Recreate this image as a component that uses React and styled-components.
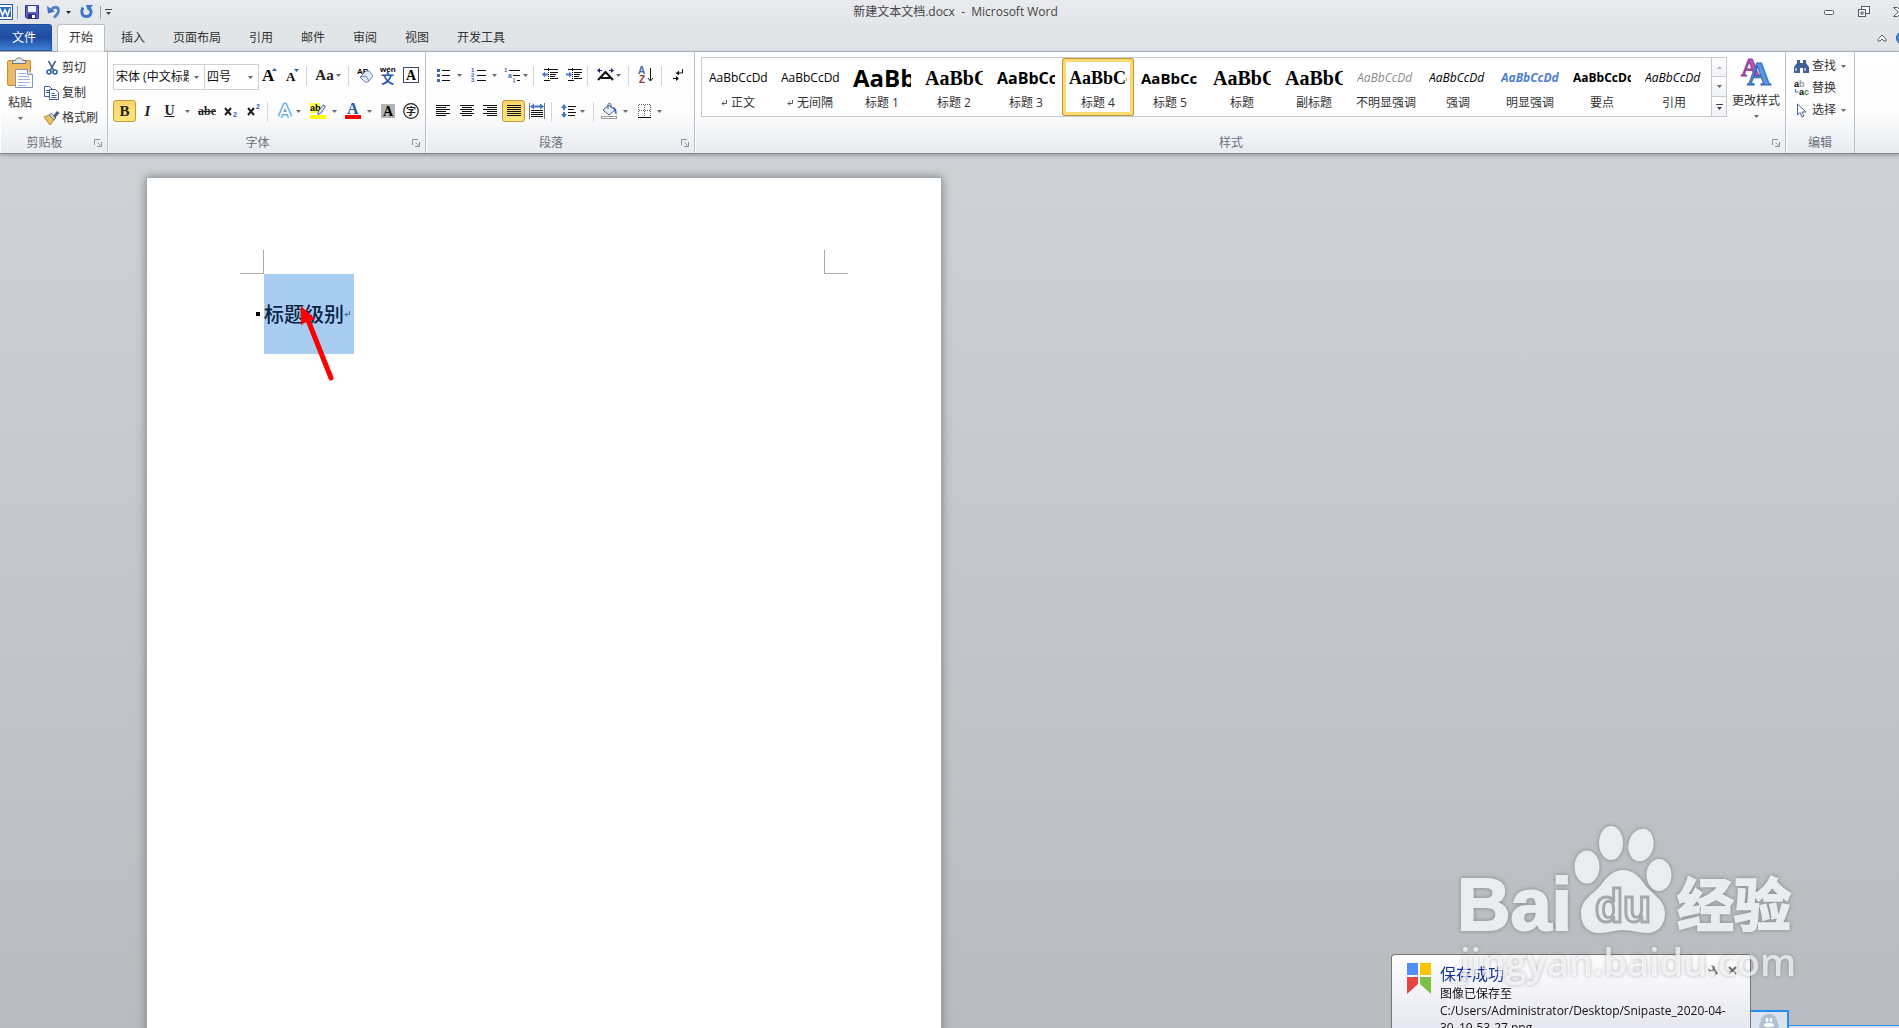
import React from 'react';
import styled, { createGlobalStyle } from 'styled-components';

export default function App() {
  return (
    <Window>
      <GlobalStyle />
      <TitleBar>
        <QuickAccess>
          <QuickButton $w={17} aria-label="Word">
            <WordIcon />
          </QuickButton>
          <QuickLine />
          <QuickButton $w={27} aria-label="保存">
            <SaveIcon />
          </QuickButton>
          <QuickButton $w={28} $gap={5} aria-label="撤消">
            <UndoIcon />
            <Arrow dark />
          </QuickButton>
          <QuickButton $w={27} aria-label="重复">
            <RedoIcon />
          </QuickButton>
          <QuickLine />
          <QuickButton $w={14} aria-label="自定义快速访问工具栏">
            <MoreIcon />
          </QuickButton>
        </QuickAccess>
        <DocTitle>新建文本文档.docx&nbsp; -&nbsp; Microsoft Word</DocTitle>
        <WindowControls>
          <button aria-label="最小化">
            <svg width="12" height="12">
              <rect x="1.5" y="4.5" width="9" height="4" rx="1" fill="#fff" stroke="#555b6b" />
            </svg>
          </button>
          <button aria-label="还原">
            <svg width="14" height="12" fill="#fff" stroke="#555b6b">
              <rect x="4.5" y="0.5" width="8" height="7" />
              <rect x="1.5" y="3.5" width="7" height="7" />
              <rect x="4" y="6" width="2" height="2" />
            </svg>
          </button>
          <button aria-label="关闭">
            <svg width="6" height="12" fill="#fff" stroke="#555b6b">
              <path d="M0.5 1.5h4l3 3l3-3h4l-5 4.5l5 4.5h-4l-3-3l-3 3h-4l5-4.5z" />
            </svg>
          </button>
        </WindowControls>
      </TitleBar>

      <TabBar>
        <FileTab>文件</FileTab>
        {tabs.map((tab) => (
          <Tab key={tab} $active={tab === '开始'}>
            {tab}
          </Tab>
        ))}
        <TabTools>
          <button aria-label="功能区最小化">
            <svg width="10" height="8" fill="#fff" stroke="#555b6b">
              <path d="M1 5.5L5 1l4 4.5v1.5H7L5 5L3 7H1z" />
            </svg>
          </button>
          <button aria-label="帮助">
            <svg width="3" height="14">
              <circle cx="7" cy="7" r="6.5" fill="#3f8be0" stroke="#2a62ad" />
            </svg>
          </button>
        </TabTools>
      </TabBar>

      <Ribbon>
        <Group $w={108} name="剪贴板" launcher>
          <ClipboardBody>
            <BigButton $w={40}>
              <PasteIcon />
              粘贴
              <Arrow />
            </BigButton>
            <SmallColumn $row={25} $left={4}>
              <SmallButton>
                <CutIcon />
                剪切
              </SmallButton>
              <SmallButton>
                <CopyIcon />
                复制
              </SmallButton>
              <SmallButton>
                <BrushIcon />
                格式刷
              </SmallButton>
            </SmallColumn>
          </ClipboardBody>
        </Group>

        <Group $w={318} name="字体" launcher>
          <Rows>
            <Row>
              <Combo $w={92}>
                <select aria-label="字体">
                  <option>宋体 (中文标题)</option>
                </select>
                <Arrow />
              </Combo>
              <Combo $w={54}>
                <select aria-label="字号">
                  <option>四号</option>
                </select>
                <Arrow />
              </Combo>
              <Tool $w={22} aria-label="增大字体">
                <GrowIcon />
              </Tool>
              <Tool $w={23} aria-label="缩小字体">
                <ShrinkIcon />
              </Tool>
              <Line />
              <Tool $w={36} $gap={2} aria-label="更改大小写">
                <Glyph $size={15}>Aa</Glyph>
                <Arrow />
              </Tool>
              <Line />
              <Tool $w={24} aria-label="清除格式">
                <EraserIcon />
              </Tool>
              <Tool $w={23} aria-label="拼音指南">
                <PinyinIcon />
              </Tool>
              <Tool $w={23} aria-label="字符边框">
                <BoxedIcon />
              </Tool>
            </Row>
            <Row>
              <Tool $w={23} $on aria-label="加粗">
                <Glyph $size={15}>B</Glyph>
              </Tool>
              <Tool $w={23} aria-label="倾斜">
                <Glyph $size={15} $italic>
                  I
                </Glyph>
              </Tool>
              <Tool $w={36} $gap={10} aria-label="下划线">
                <Glyph $size={14} $line="underline">
                  U
                </Glyph>
                <Arrow />
              </Tool>
              <Tool $w={24} aria-label="删除线">
                <Glyph $size={12} $line="line-through">
                  abe
                </Glyph>
              </Tool>
              <Tool $w={23} aria-label="下标">
                <ScriptIcon y={14} />
              </Tool>
              <Tool $w={23} aria-label="上标">
                <ScriptIcon y={6} />
              </Tool>
              <Line />
              <Tool $w={35} $gap={3} aria-label="文本效果">
                <EffectIcon />
                <Arrow />
              </Tool>
              <Tool $w={35} $gap={6} aria-label="突出显示">
                <HighlightIcon />
                <Arrow />
              </Tool>
              <Tool $w={35} $gap={6} aria-label="字体颜色">
                <ColorIcon />
                <Arrow />
              </Tool>
              <Tool $w={24} aria-label="字符底纹">
                <ShadeIcon />
              </Tool>
              <Tool $w={22} aria-label="带圈字符">
                <CircledIcon />
              </Tool>
            </Row>
          </Rows>
        </Group>

        <Group $w={269} name="段落" launcher>
          <Rows>
            <Row>
              <Tool $w={35} $gap={5} aria-label="项目符号">
                <BulletsIcon />
                <Arrow />
              </Tool>
              <Tool $w={35} $gap={5} aria-label="编号">
                <NumbersIcon />
                <Arrow />
              </Tool>
              <Tool $w={30} $gap={2} aria-label="多级列表">
                <LevelsIcon />
                <Arrow />
              </Tool>
              <Line />
              <Tool $w={26} aria-label="减少缩进量">
                <IndentIcon back />
              </Tool>
              <Tool $w={22} aria-label="增加缩进量">
                <IndentIcon />
              </Tool>
              <Line />
              <Tool $w={35} $gap={2} aria-label="中文版式">
                <AsianIcon />
                <Arrow />
              </Tool>
              <Line />
              <Tool $w={27} aria-label="排序">
                <SortIcon />
              </Tool>
              <Line />
              <Tool $w={26} aria-label="显示编辑标记">
                <MarkIcon />
              </Tool>
            </Row>
            <Row>
              <Tool $w={24} aria-label="文本左对齐">
                <AlignIcon lines={[[0, 14], [0, 10], [0, 14], [0, 10], [0, 14], [0, 10]]} />
              </Tool>
              <Tool $w={23} aria-label="居中">
                <AlignIcon lines={[[0, 14], [2, 10], [0, 14], [2, 10], [0, 14], [2, 10]]} />
              </Tool>
              <Tool $w={24} aria-label="文本右对齐">
                <AlignIcon lines={[[0, 14], [4, 10], [0, 14], [4, 10], [0, 14], [4, 10]]} />
              </Tool>
              <Tool $w={23} $on aria-label="两端对齐">
                <AlignIcon lines={[[0, 14], [0, 14], [0, 14], [0, 14], [0, 14], [0, 14]]} />
              </Tool>
              <Tool $w={24} aria-label="分散对齐">
                <DistributeIcon />
              </Tool>
              <Line />
              <Tool $w={36} $gap={3} aria-label="行距">
                <SpacingIcon />
                <Arrow />
              </Tool>
              <Line />
              <Tool $w={35} $gap={5} aria-label="底纹">
                <BucketIcon />
                <Arrow />
              </Tool>
              <Tool $w={35} $gap={5} aria-label="边框">
                <BorderIcon />
                <Arrow />
              </Tool>
            </Row>
          </Rows>
        </Group>

        <Group name="样式" launcher>
          <StylesBody>
            <Gallery>
              {styleList.map((item) => (
                <StyleItem key={item.name} $active={item.name === '标题 4'}>
                  <Sample
                    $size={item.size}
                    $serif={item.serif}
                    $bold={item.bold}
                    $italic={item.italic}
                    $color={item.color}
                  >
                    {item.text || 'AaBbCcDd'}
                  </Sample>
                  <StyleName>
                    {item.mark && <ReturnIcon />}
                    {item.name}
                  </StyleName>
                </StyleItem>
              ))}
            </Gallery>
            <GalleryScroll>
              <button aria-label="上一行" disabled>
                <svg width="5" height="3">
                  <path d="M0 3L2.5 0L5 3z" fill="#b5b9c0" />
                </svg>
              </button>
              <button aria-label="下一行">
                <Arrow />
              </button>
              <button aria-label="其他">
                <MoreIcon />
              </button>
            </GalleryScroll>
            <BigButton $w={58}>
              <ChangeStylesIcon />
              更改样式
              <Arrow />
            </BigButton>
          </StylesBody>
        </Group>

        <Group $w={69} name="编辑">
          <SmallColumn $row={22} $left={8}>
            <SmallButton>
              <FindIcon />
              查找
              <Arrow />
            </SmallButton>
            <SmallButton>
              <ReplaceIcon />
              替换
            </SmallButton>
            <SmallButton>
              <SelectIcon />
              选择
              <Arrow />
            </SmallButton>
          </SmallColumn>
        </Group>
        <RibbonRest />
      </Ribbon>

      <Workspace>
        <Page>
          <Corners>
            <Corner $side="right" />
            <Corner $side="left" />
          </Corners>
          <HeadingLine>
            <HeadingDot />
            <Selected>
              标题级别
              <ReturnIcon color="#4a6a92" />
              <RedArrow />
            </Selected>
          </HeadingLine>
        </Page>
      </Workspace>

      <InputPanel>
        <PenguinBox>
          <PenguinIcon />
        </PenguinBox>
        <PanelEdge />
      </InputPanel>
      <Toast>
        <ToastLogo />
        <ToastText>
          <ToastHead>
            保存成功
            <ToastTools>
              <button aria-label="设置">
                <WrenchIcon />
              </button>
              <button aria-label="关闭">
                <svg width="9" height="9" stroke="#6a6a6a" strokeWidth="2">
                  <path d="M1 1l7 7M8 1L1 8" />
                </svg>
              </button>
            </ToastTools>
          </ToastHead>
          <p>图像已保存至</p>
          <p>
            C:/Users/Administrator/Desktop/Snipaste_2020-04-
            <wbr />
            30_19-53-27.png
          </p>
        </ToastText>
      </Toast>
      <Watermark />
    </Window>
  );
}

const tabs = ['开始', '插入', '页面布局', '引用', '邮件', '审阅', '视图', '开发工具'];

const styleList = [
  { name: '正文', mark: true },
  { name: '无间隔', mark: true },
  { name: '标题 1', size: 24, bold: true, text: 'AaBb' },
  { name: '标题 2', size: 20, bold: true, serif: true, text: 'AaBbC' },
  { name: '标题 3', size: 16, bold: true, text: 'AaBbCc' },
  { name: '标题 4', size: 18, bold: true, serif: true, text: 'AaBbCc' },
  { name: '标题 5', size: 15, bold: true, text: 'AaBbCc' },
  { name: '标题', size: 20, bold: true, serif: true, text: 'AaBbC' },
  { name: '副标题', size: 20, bold: true, serif: true, text: 'AaBbC' },
  { name: '不明显强调', italic: true, color: '#8a8a8a' },
  { name: '强调', italic: true },
  { name: '明显强调', italic: true, bold: true, color: '#4f81c7' },
  { name: '要点', bold: true },
  { name: '引用', italic: true }
];

/* ribbon group with its caption */

function Group({ $w, name, launcher, children }) {
  return (
    <GroupBox $w={$w}>
      {children}
      <Caption>
        <span>{name}</span>
        {launcher && (
          <Launcher aria-label={`${name}对话框`}>
            <svg width="8" height="8" fill="none" stroke="#8b919c">
              <path d="M0.5 6V0.5H6M3.5 3.5l3 3M7.5 3v4.5H3" />
            </svg>
          </Launcher>
        )}
      </Caption>
    </GroupBox>
  );
}

/* icons */

function Arrow({ dark }) {
  return (
    <svg width="5" height="3">
      <path d="M0 0h5L2.5 3z" fill={dark ? '#222' : '#666a70'} />
    </svg>
  );
}

function MoreIcon() {
  return (
    <svg width="7" height="6" fill="#444">
      <path d="M0 0h7v1H0zM1 3h5L3.5 6z" />
    </svg>
  );
}

function ReturnIcon({ color = '#555' }) {
  return (
    <svg width="6" height="6" fill="none" stroke={color}>
      <path d="M5.500 0v3.500H1M3 1.500L1 3.500L3 5.500" />
    </svg>
  );
}

function WordIcon() {
  return (
    <svg width="13" height="16">
      <rect x="-2" y="0.500" width="14.500" height="15" fill="#fff" stroke="#2b5da8" />
      <rect x="-1" y="3" width="12" height="10" fill="#2f6cc0" />
      <path d="M0 4.500L2.500 11.500L5 6L7.500 11.500L10 4.500" fill="none" stroke="#fff" strokeWidth="1.600" />
    </svg>
  );
}

function SaveIcon() {
  return (
    <svg width="14" height="14">
      <path d="M0.500 0.500h13v13H2l-1.500-1.500z" fill="#5a5fc8" stroke="#34388f" />
      <rect x="3" y="1" width="8" height="6" fill="#f4f6ff" />
      <rect x="3" y="9" width="8" height="5" fill="#2c2f6e" />
      <rect x="7" y="10" width="3" height="3" fill="#fff" />
    </svg>
  );
}

function UndoIcon() {
  return (
    <svg width="14" height="14">
      <path d="M4 5C7 1 11.500 1.500 11.500 5.500C11.500 8.500 9.500 10.500 7 12.500" fill="none" stroke="#5580c8" strokeWidth="2.800" />
      <path d="M0 1l1 7.500l7-2z" fill="#4272c4" />
    </svg>
  );
}

function RedoIcon() {
  return (
    <svg width="14" height="14">
      <path d="M3 2.500C0.500 7 2 11.500 6.500 11.500S12.500 6 9.500 3.500" fill="none" stroke="#3a74cc" strokeWidth="2.800" />
      <path d="M6 0h7l-5 6z" fill="#3a74cc" />
    </svg>
  );
}

function PasteIcon() {
  return (
    <svg width="28" height="32">
      <rect x="1.500" y="3.500" width="23" height="25" rx="1.500" fill="#edba5c" stroke="#c98f35" />
      <path d="M6.500 6.500V3.500H9.500C9.500 0 16.500 0 16.500 3.500h3v3z" fill="#e3e5e8" stroke="#6f747c" />
      <path d="M9.500 12.500h12l5 5v13h-17z" fill="#fff" stroke="#8594b5" />
      <path d="M21.500 12.500v5h5" fill="#dfe7f5" stroke="#8594b5" />
      <path d="M12 16.500h8M12 19.500h11M12 22.500h12M12 25.500h12M12 28.500h8" stroke="#9db4dd" />
    </svg>
  );
}

function CutIcon() {
  return (
    <svg viewBox="-1 0 16 14" width="16" height="14" fill="none">
      <path d="M3.500 0L8.500 9M10.500 0L5.500 9" stroke="#4b6489" strokeWidth="1.600" />
      <circle cx="4" cy="11" r="2" stroke="#2f61b8" strokeWidth="1.600" />
      <circle cx="10" cy="11" r="2" stroke="#2f61b8" strokeWidth="1.600" />
    </svg>
  );
}

function CopyIcon() {
  return (
    <svg width="16" height="14" fill="#fff" stroke="#3c5f9d">
      <path d="M0.500 0.500h5l3 3v7h-8zM2 4.500h3M2 6.500h3" />
      <path d="M5.500 3.500h6l3 3v7h-9zM7.500 7.500h3M7.500 9.500h5M7.500 11.500h5" />
    </svg>
  );
}

function BrushIcon() {
  return (
    <svg width="16" height="14">
      <path d="M0 6l5-2l5 5l-4 5z" fill="#edc060" stroke="#b48736" />
      <path d="M5 4l2.500-1.500L12 7l-2 2z" fill="#d8dce2" stroke="#666e7a" />
      <path d="M9 5l4-5l2.500 2L11 7z" fill="#4a5f80" />
    </svg>
  );
}

function GrowIcon() {
  return (
    <svg width="16" height="16">
      <SerifText x="0" y="14" fontSize="17">A</SerifText>
      <path d="M10 4l2.500-3L15 4z" fill="#2f5fa8" />
    </svg>
  );
}

function ShrinkIcon() {
  return (
    <svg width="14" height="16">
      <SerifText x="0" y="14" fontSize="13">A</SerifText>
      <path d="M8 2h5L10.500 5z" fill="#2f5fa8" />
    </svg>
  );
}

function EraserIcon() {
  return (
    <svg width="17" height="16">
      <SansText x="1" y="7" fontSize="8">AB</SansText>
      <path d="M4 10l5 5h3l5-6l-4-5h-3z" fill="#e4eaf6" stroke="#7186b0" />
      <path d="M4 10l6-1l3 5" fill="none" stroke="#7186b0" />
    </svg>
  );
}

function PinyinIcon() {
  return (
    <svg width="18" height="17">
      <SansText x="1" y="5" fontSize="8">wén</SansText>
      <HanText x="2" y="16" fontSize="13" fill="#2957a5">文</HanText>
    </svg>
  );
}

function BoxedIcon() {
  return (
    <svg width="16" height="16">
      <rect x="0.500" y="0.500" width="15" height="15" fill="#fff" stroke="#3e4b60" />
      <SerifText x="3" y="13" fontSize="14">A</SerifText>
    </svg>
  );
}

function ScriptIcon({ y }) {
  return (
    <svg width="15" height="16">
      <path d="M2 5l6 7M8 5l-6 7" stroke="#222" strokeWidth="2" />
      <SansText x="10" y={y} fontSize="7" fill="#2f5fb5">2</SansText>
    </svg>
  );
}

function EffectIcon() {
  return (
    <svg width="16" height="16" fill="none" strokeLinejoin="round">
      <path d="M3 14L8 2l5 12M5 10h6" stroke="#b5dbf7" strokeWidth="6" />
      <path d="M3 14L8 2l5 12M5 10h6" stroke="#5aa2da" strokeWidth="4" />
      <path d="M3 14L8 2l5 12M5 10h6" stroke="#fff" strokeWidth="2" />
    </svg>
  );
}

function HighlightIcon() {
  return (
    <svg width="16" height="16">
      <rect width="10" height="10" fill="#ffff3c" />
      <SansText x="0" y="8" fontSize="9">ab</SansText>
      <path d="M8 9l5-7l2.500 1.500L11 10l-3 1.500z" fill="#dfe8f6" stroke="#40618f" />
      <rect y="12" width="16" height="4" fill="#ff0" />
    </svg>
  );
}

function ColorIcon() {
  return (
    <svg width="16" height="16">
      <SerifText x="2" y="11" fontSize="16" fill="#2955a3">A</SerifText>
      <rect y="12" width="16" height="4" fill="#f00" />
    </svg>
  );
}

function ShadeIcon() {
  return (
    <svg width="14" height="14">
      <rect width="14" height="14" fill="#b4b4b4" />
      <SerifText x="2" y="12" fontSize="14">A</SerifText>
    </svg>
  );
}

function CircledIcon() {
  return (
    <svg width="16" height="16">
      <circle cx="8" cy="8" r="7.300" fill="#fff" stroke="#222" strokeWidth="1.200" />
      <HanText x="3" y="12" fontSize="10" fill="#222">字</HanText>
    </svg>
  );
}

function BulletsIcon() {
  return (
    <svg width="16" height="16" stroke="#111">
      <path d="M6 3.500h8M6 8.500h8M6 13.500h8" />
      <path d="M1 3.500h3M1 8.500h3M1 13.500h3" stroke="#3f66ad" strokeWidth="3" />
    </svg>
  );
}

function NumbersIcon() {
  return (
    <svg width="16" height="16">
      <path d="M6 3.500h9M6 8.500h9M6 13.500h9" stroke="#111" />
      <SansText x="0" y="5" fontSize="6" fill="#3f66ad">1</SansText>
      <SansText x="0" y="10" fontSize="6" fill="#3f66ad">2</SansText>
      <SansText x="0" y="15" fontSize="6" fill="#3f66ad">3</SansText>
    </svg>
  );
}

function LevelsIcon() {
  return (
    <svg width="17" height="16">
      <path d="M5 3.500h11M9 8.500h7M13 13.500h3" stroke="#111" />
      <SansText x="0" y="5" fontSize="6" fill="#3f66ad">1</SansText>
      <SansText x="4" y="11" fontSize="7" fill="#3f66ad">a</SansText>
      <SansText x="9" y="16" fontSize="7" fill="#3f66ad">i</SansText>
    </svg>
  );
}

function IndentIcon({ back }) {
  return (
    <svg width="16" height="16">
      <path d="M2 2.500h14M8 5.500h8M8 7.500h6M8 9.500h5M8 11.500h8M2 13.500h6" stroke="#111" />
      <path d="M6.500 1v14" stroke="#111" strokeDasharray="1 1" />
      <path d={back ? 'M0 7.500L3 4.500V6.500H6V8.500H3V10.500z' : 'M6 7.500L3 4.500V6.500H0V8.500H3V10.500z'} fill="#4378cc" />
    </svg>
  );
}

function AsianIcon() {
  return (
    <svg width="17" height="16" fill="none">
      <path d="M1 13L8.500 5L16 13M4 11h9" stroke="#111" strokeWidth="2" />
      <path d="M1 3.500h4M12 3.500h4" stroke="#1b1f86" />
      <path d="M0 3.500l3-2.500v5zM17 3.500l-3-2.500v5z" fill="#1b1f86" />
    </svg>
  );
}

function SortIcon() {
  return (
    <svg width="16" height="18">
      <SansText x="0" y="8" fontSize="10" fill="#3f66ad">A</SansText>
      <SansText x="1" y="17" fontSize="10" fill="#983b3b">Z</SansText>
      <path d="M12.500 2v13M10 12l2.500 3l2.500-3" fill="none" stroke="#111" />
    </svg>
  );
}

function MarkIcon() {
  return (
    <svg width="12" height="14" fill="none" stroke="#111">
      <path d="M10.500 1v4h-6M1 10.500h5" />
      <path d="M7 2.500v5L4 5zM4 8v5l3-2.500z" fill="#111" stroke="none" />
    </svg>
  );
}

function AlignIcon({ lines }) {
  return (
    <svg width="14" height="12" fill="#111">
      {lines.map(([x, w], i) => (
        <rect key={i} x={x} y={i * 2} width={w} height="1" />
      ))}
    </svg>
  );
}

function DistributeIcon() {
  return (
    <svg width="16" height="16">
      <path d="M0.500 0v16M15.500 0v16" stroke="#6d7484" />
      <path d="M2 7.500h12M2 9.500h12M2 11.500h12M2 13.500h12" stroke="#111" />
      <path d="M1 3.500l4-3v2h6v-2l4 3l-4 3v-2H5v2z" fill="#3f74c8" />
    </svg>
  );
}

function SpacingIcon() {
  return (
    <svg width="16" height="16">
      <path d="M7 3.500h8M7 6.500h6M7 9.500h8M7 12.500h7" stroke="#111" />
      <path d="M0 5l3-4l3 4H4v2H2V5zM0 11l3 4l3-4H4V9H2v2z" fill="#3f74c8" />
    </svg>
  );
}

function BucketIcon() {
  return (
    <svg width="17" height="16">
      <path d="M2 7l6-5l6 5l-6 5z" fill="#e6edf8" stroke="#45618f" />
      <path d="M7 6V1.500c0-1.500 3-1.500 3 0V5" fill="none" stroke="#45618f" />
      <path d="M11 4c4 0 5 3 4.500 8c-1.500-1-2-3-2-5z" fill="#3568b8" />
      <rect x="0.500" y="13.500" width="15" height="2" fill="#fff" stroke="#999" />
    </svg>
  );
}

function BorderIcon() {
  return (
    <svg width="14" height="14" fill="none" stroke="#666">
      <path d="M0.500 12V0.500H12.500V12M6.500 1v11M1 6.500h12" strokeDasharray="1 1" />
      <path d="M0 13.500h13" stroke="#111" />
    </svg>
  );
}

function ChangeStylesIcon() {
  return (
    <svg width="30" height="30">
      <SerifText x="0" y="19" fontSize="26" fill="#b758bd" stroke="#8f3c98">A</SerifText>
      <SerifText x="6" y="28" fontSize="33" fill="#5b97e2" stroke="#2f63b0">A</SerifText>
    </svg>
  );
}

function FindIcon() {
  return (
    <svg width="16" height="13" fill="#3f5f96">
      <path d="M3 0h3v3h3V0h3v3l3 4v6h-6V8H6v5H0V7l3-4z" />
      <path d="M2 8v3M11 8v3" stroke="#c8d6ee" strokeWidth="1.500" />
    </svg>
  );
}

function ReplaceIcon() {
  return (
    <svg width="16" height="16">
      <SansText x="0" y="7" fontSize="9">
        a<tspan fill="#999">b</tspan>
      </SansText>
      <SansText x="5" y="15" fontSize="9">
        a<tspan fill="#3a9a3a">c</tspan>
      </SansText>
      <path d="M1.500 9v3h3" fill="none" stroke="#3f74c8" />
    </svg>
  );
}

function SelectIcon() {
  return (
    <svg width="16" height="15">
      <path d="M3.500 1v11l2.500-2.500l2 4.500l2-1l-2-4h4z" fill="#fff" stroke="#4a5f8f" />
    </svg>
  );
}

function PenguinIcon() {
  return (
    <svg width="22" height="14">
      <path d="M2 16C0 11 3 8 3 6C4 2 7 0 11 0S18 2 19 6C19 8 22 11 20 16z" fill="#b3c2d3" />
      <ellipse cx="9" cy="6" rx="1.500" ry="2" fill="#fff" />
      <ellipse cx="13" cy="6" rx="1.500" ry="2" fill="#fff" />
      <ellipse cx="11" cy="11" rx="5" ry="2" fill="#fff" />
    </svg>
  );
}

function WrenchIcon() {
  return (
    <svg width="10" height="10">
      <path d="M0 3L2 5H4.500V2.500L3 0.500C6 0 7.500 2 7 4L10 8L8 10L4.500 7C2 7.500 0 5.500 0 3z" fill="#7a7a7a" />
    </svg>
  );
}

function ToastLogo() {
  return (
    <svg width="24" height="32">
      <rect width="11" height="12" fill="#4f8ff7" />
      <rect x="13" width="11" height="12" fill="#fcc404" />
      <path d="M0 14h11v7L0 31z" fill="#e84444" />
      <path d="M13 14h11v17L13 21z" fill="#7cc142" />
    </svg>
  );
}

function RedArrow() {
  return (
    <RedArrowSvg width="36" height="78">
      <path d="M7 15L30 73" stroke="#f00" strokeWidth="5" strokeLinecap="round" />
      <path d="M0 1L14 14L7 16L0 20z" fill="#f00" />
    </RedArrowSvg>
  );
}

function Watermark() {
  return (
    <WatermarkSvg width="350" height="180" viewBox="0 0 350 180">
      <g fill="#ebecee">
        <SansText x="4" y="110" fontSize="74" stroke="#ebecee" strokeWidth="2">
          Bai
        </SansText>
        <ellipse cx="134" cy="47" rx="12.500" ry="16.500" />
        <ellipse cx="158" cy="23" rx="12" ry="17" />
        <ellipse cx="188" cy="25" rx="12.500" ry="16.500" transform="rotate(12 188 25)" />
        <ellipse cx="206" cy="55" rx="12.500" ry="16" />
        <path d="M170 50C180 50 187 57 192 65C199 74 212 80 212 93C212 106 204 113 194 113C184 113 180 110 170 110C160 110 157 113 146 113C135 113 128 106 128 93C128 79 141 74 148 65C154 57 160 50 170 50z" />
        <HanText x="224" y="106" fontSize="57" stroke="#ebecee" strokeWidth="2">
          经验
        </HanText>
      </g>
      <SansText x="142" y="102" fontSize="46" fill="#ebecee" stroke="#a5a9ae" strokeWidth="3">
        du
      </SansText>
      <Address x="7" y="156">
        jingyan.baidu.com
      </Address>
    </WatermarkSvg>
  );
}

const GlobalStyle = createGlobalStyle`
  * {
    box-sizing: border-box;
  }
  body {
    margin: 0;
    overflow: hidden;
    font-family: 'Open Sans', 'Noto Sans CJK SC', sans-serif;
    font-size: 12px;
    line-height: 16px;
    color: #333;
  }
  button {
    display: flex;
    align-items: center;
    justify-content: center;
    margin: 0;
    padding: 0;
    border: none;
    background: none;
    font: inherit;
    color: inherit;
  }
  p {
    margin: 0;
  }
  svg {
    flex: none;
    overflow: visible;
  }
`;

const SerifText = styled.text`
  font-family: 'Liberation Serif', serif;
  font-weight: bold;
`;

const SansText = styled.text`
  font-family: 'Liberation Sans', sans-serif;
  font-weight: bold;
`;

const HanText = styled.text`
  font-family: 'Noto Sans CJK SC', sans-serif;
  font-weight: bold;
`;

const Window = styled.div`
  display: flex;
  flex-direction: column;
  height: 100vh;
  overflow: hidden;
`;

const TitleBar = styled.header`
  display: grid;
  grid-template-columns: 1fr auto 1fr;
  align-items: center;
  height: 24px;
  background: linear-gradient(#e9ebef, #e3e6e9);
`;

const QuickAccess = styled.div`
  display: flex;
  align-items: center;
`;

const QuickButton = styled.button`
  width: ${({ $w }) => $w}px;
  height: 22px;
  gap: ${({ $gap }) => $gap || 0}px;
  &:first-child {
    justify-content: flex-start;
  }
`;

const QuickLine = styled.i`
  width: 1px;
  height: 13px;
  background: #9a9ea6;
`;

const DocTitle = styled.div`
  padding-left: 12px;
  color: #444;
`;

const WindowControls = styled.div`
  display: flex;
  justify-content: flex-end;
  gap: 22px;
`;

const TabBar = styled.nav`
  display: flex;
  height: 28px;
  background: #e1e5e8;
  border-bottom: 1px solid #b3b6ba;
`;

const FileTab = styled.button`
  width: 52px;
  height: 27px;
  margin-right: 5px;
  padding-right: 3px;
  border: 1px solid #1f4d9c;
  border-left: none;
  border-radius: 0 3px 0 0;
  background: linear-gradient(#2a5db0, #1d4c9f 50%, #3f7fd6);
  color: #fff;
`;

const Tab = styled.button`
  height: 28px;
  padding: ${({ $active }) => ($active ? '0 12px' : '0 14px')};
  ${({ $active }) =>
    $active &&
    `
    margin-right: 2px;
    background: #fff;
    border-radius: 3px 3px 0 0;
    box-shadow: inset 1px 1px #b9bdc4, inset -1px 0 #b9bdc4;
  `}
`;

const TabTools = styled.div`
  display: flex;
  gap: 9px;
  margin-left: auto;
`;

const Ribbon = styled.section`
  position: relative;
  display: flex;
  height: 102px;
  background: linear-gradient(#fff, #fdfdfd 60%, #e8ebf0);
  border-bottom: 1px solid #868b93;
  box-shadow: 0 1px 4px #8c9097;
`;

const GroupBox = styled.div`
  display: flex;
  flex-direction: column;
  justify-content: space-between;
  ${({ $w }) => ($w ? `flex: none; width: ${$w}px;` : 'flex: 1; min-width: 0;')}
  border-right: 1px solid #bcc0c7;
  box-shadow: inset 1px 0 #fff;
`;

const RibbonRest = styled.div`
  flex: none;
  width: 44px;
`;

const Caption = styled.div`
  display: flex;
  align-items: center;
  height: 20px;
  color: #6b7080;
  text-align: center;
  span {
    flex: 1;
  }
`;

const Launcher = styled.button`
  width: 18px;
`;

const ClipboardBody = styled.div`
  display: flex;
`;

const BigButton = styled.button`
  flex: none;
  flex-direction: column;
  justify-content: flex-start;
  gap: 6px;
  width: ${({ $w }) => $w}px;
  padding-top: 5px;
`;

const SmallColumn = styled.div`
  display: grid;
  grid-auto-rows: ${({ $row }) => $row}px;
  justify-items: start;
  padding: 3px 0 0 ${({ $left }) => $left}px;
`;

const SmallButton = styled.button`
  gap: 2px;
  svg:last-child:not(:first-child) {
    margin-left: 3px;
  }
`;

const Rows = styled.div`
  display: flex;
  flex-direction: column;
  gap: 10px;
  padding: 12px 0 0 5px;
`;

const Row = styled.div`
  display: flex;
  align-items: flex-start;
  height: 26px;
`;

const Combo = styled.label`
  position: relative;
  flex: none;
  width: ${({ $w }) => $w}px;
  height: 26px;
  border: 1px solid #cdd0d6;
  & + & {
    border-left: none;
  }
  select {
    appearance: none;
    width: 100%;
    height: 100%;
    padding: 0 15px 0 2px;
    border: none;
    background: #fff;
    font: inherit;
    color: #111;
  }
  svg {
    position: absolute;
    top: 11px;
    right: 5px;
    pointer-events: none;
  }
`;

const Tool = styled.button`
  flex: none;
  width: ${({ $w }) => $w}px;
  height: 22px;
  gap: ${({ $gap }) => $gap || 0}px;
  ${({ $on }) =>
    $on &&
    `
    border: 1px solid #c29a3c;
    border-radius: 3px;
    background: linear-gradient(#fbd56c, #fde57c);
  `}
`;

const Line = styled.i`
  flex: none;
  width: 1px;
  height: 20px;
  margin: 2px 3px 0 2px;
  background: #d3d6dc;
`;

const Glyph = styled.span`
  font-family: 'Liberation Serif', serif;
  font-size: ${({ $size }) => $size}px;
  font-weight: bold;
  font-style: ${({ $italic }) => ($italic ? 'italic' : 'normal')};
  text-decoration: ${({ $line }) => $line || 'none'};
  color: #222;
`;

const StylesBody = styled.div`
  display: flex;
  padding-left: 6px;
`;

const Gallery = styled.div`
  display: flex;
  flex: 1;
  min-width: 0;
  height: 60px;
  margin-top: 5px;
  border: 1px solid #c6c9cd;
  background: #fff;
  overflow: hidden;
`;

const StyleItem = styled.button`
  flex: none;
  flex-direction: column;
  justify-content: flex-start;
  width: 72px;
  height: 58px;
  ${({ $active }) =>
    $active &&
    `
    border-radius: 3px;
    box-shadow: inset 0 0 0 1px #c1953a, inset 0 0 0 4px #fcdc70;
  `}
`;

const Sample = styled.span`
  width: 58px;
  height: 37px;
  overflow: hidden;
  white-space: nowrap;
  text-align: left;
  line-height: 40px;
  font-family: ${({ $serif }) => ($serif ? "'Liberation Serif', serif" : "'Open Sans', sans-serif")};
  font-size: ${({ $size }) => $size || 12}px;
  font-weight: ${({ $bold }) => ($bold ? 'bold' : 'normal')};
  font-style: ${({ $italic }) => ($italic ? 'italic' : 'normal')};
  color: ${({ $color }) => $color || '#000'};
`;

const StyleName = styled.span`
  display: flex;
  align-items: center;
  gap: 4px;
`;

const GalleryScroll = styled.div`
  display: grid;
  grid-template-rows: repeat(3, 20px);
  flex: none;
  width: 15px;
  margin-top: 5px;
  button {
    border: 1px solid #c6c9cd;
    border-left: none;
    background: linear-gradient(#fff, #eff1f4);
  }
  button + button {
    border-top: none;
  }
`;

const Workspace = styled.main`
  flex: 1;
  min-height: 0;
  overflow: hidden;
  padding: 24px 0 0 147px;
  background: linear-gradient(#ced2d6, #b8bbc0);
`;

const Page = styled.article`
  width: 794px;
  height: 1123px;
  padding-top: 72px;
  background: #fff;
  box-shadow: 0 0 0 1px #a3a8ae, 0 0 9px 1px #7d8288;
`;

const Corners = styled.div`
  display: flex;
  justify-content: space-between;
  padding: 0 93px;
`;

const Corner = styled.div`
  width: 24px;
  height: 24px;
  border-bottom: 1px solid #aaa;
  border-${({ $side }) => $side}: 1px solid #aaa;
`;

const HeadingLine = styled.div`
  display: flex;
  align-items: center;
  gap: 4px;
  padding-left: 109px;
`;

const HeadingDot = styled.i`
  width: 4px;
  height: 4px;
  background: #000;
`;

const Selected = styled.h4`
  position: relative;
  display: flex;
  align-items: center;
  width: 90px;
  height: 80px;
  margin: 0;
  background: #a9cdf1;
  color: #0a2444;
  font-family: 'Noto Sans CJK SC', sans-serif;
  font-size: 20px;
  font-weight: 500;
  white-space: nowrap;
`;

const RedArrowSvg = styled.svg`
  position: absolute;
  left: 37px;
  top: 31px;
`;

const InputPanel = styled.div`
  position: fixed;
  right: 0;
  bottom: 0;
  display: flex;
  align-items: flex-end;
`;

const PenguinBox = styled.div`
  display: flex;
  justify-content: center;
  align-items: flex-end;
  width: 40px;
  height: 18px;
  border: 2px solid #2a8cf5;
  border-bottom: none;
  background: #dbe4ee;
`;

const PanelEdge = styled.div`
  width: 110px;
  height: 3px;
  border-top: 1px solid #2a8cf5;
  background: #dbe4ee;
`;

const Toast = styled.aside`
  position: fixed;
  right: 148px;
  bottom: 0;
  display: flex;
  gap: 9px;
  width: 360px;
  height: 74px;
  padding: 8px 10px 0 15px;
  overflow: hidden;
  border: 1px solid #767676;
  border-bottom: none;
  border-radius: 4px 4px 0 0;
  background: linear-gradient(#fff, #e6e7f1);
  color: #111;
`;

const ToastText = styled.div`
  flex: 1;
  line-height: 17px;
`;

const ToastHead = styled.div`
  display: flex;
  justify-content: space-between;
  height: 22px;
  line-height: 22px;
  font-size: 16px;
  color: #0c3399;
`;

const ToastTools = styled.div`
  display: flex;
  align-items: center;
  gap: 10px;
  height: 14px;
  padding-right: 3px;
`;

const WatermarkSvg = styled.svg`
  position: fixed;
  right: 96px;
  bottom: 28px;
  pointer-events: none;
  filter: drop-shadow(0 0 2px rgba(90, 94, 100, 0.6));
`;

const Address = styled.text`
  font-family: 'Open Sans', sans-serif;
  font-size: 38px;
  font-weight: 600;
  fill: #fff;
  opacity: 0.7;
`;
